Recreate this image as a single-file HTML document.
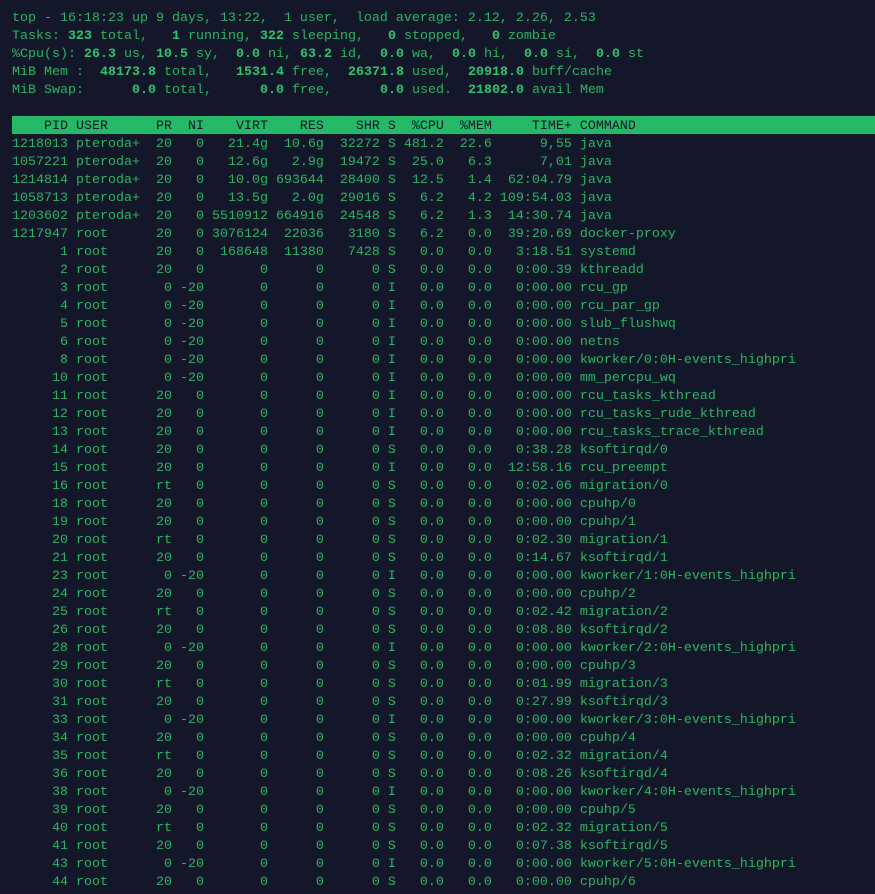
<!DOCTYPE html>
<html><head><meta charset="utf-8"><style>
html,body{margin:0;padding:0;background:#14172a;width:875px;height:894px;overflow:hidden;position:relative}
.bar{position:absolute;left:12px;top:116px;width:863px;height:18px;background:#25b866}
pre{position:relative;margin:0;padding:10px 0 0 12px;font-family:"Liberation Mono","DejaVu Sans Mono",monospace;font-size:13.33px;line-height:18px;color:#2bb463;white-space:pre}
b{color:#2fc46c}
.h{color:#14172a}
</style></head><body><div class="bar"></div><pre>top - 16:18:23 up 9 days, 13:22,  1 user,  load average: 2.12, 2.26, 2.53
Tasks: <b>323</b> total,   <b>1</b> running, <b>322</b> sleeping,   <b>0</b> stopped,   <b>0</b> zombie
%Cpu(s): <b>26.3</b> us, <b>10.5</b> sy,  <b>0.0</b> ni, <b>63.2</b> id,  <b>0.0</b> wa,  <b>0.0</b> hi,  <b>0.0</b> si,  <b>0.0</b> st
MiB Mem :  <b>48173.8</b> total,   <b>1531.4</b> free,  <b>26371.8</b> used,  <b>20918.0</b> buff/cache
MiB Swap:      <b>0.0</b> total,      <b>0.0</b> free,      <b>0.0</b> used.  <b>21802.0</b> avail Mem

<span class="h">    PID USER      PR  NI    VIRT    RES    SHR S  %CPU  %MEM     TIME+ COMMAND</span>
1218013 pteroda+  20   0   21.4g  10.6g  32272 S 481.2  22.6      9,55 java
1057221 pteroda+  20   0   12.6g   2.9g  19472 S  25.0   6.3      7,01 java
1214814 pteroda+  20   0   10.0g 693644  28400 S  12.5   1.4  62:04.79 java
1058713 pteroda+  20   0   13.5g   2.0g  29016 S   6.2   4.2 109:54.03 java
1203602 pteroda+  20   0 5510912 664916  24548 S   6.2   1.3  14:30.74 java
1217947 root      20   0 3076124  22036   3180 S   6.2   0.0  39:20.69 docker-proxy
      1 root      20   0  168648  11380   7428 S   0.0   0.0   3:18.51 systemd
      2 root      20   0       0      0      0 S   0.0   0.0   0:00.39 kthreadd
      3 root       0 -20       0      0      0 I   0.0   0.0   0:00.00 rcu_gp
      4 root       0 -20       0      0      0 I   0.0   0.0   0:00.00 rcu_par_gp
      5 root       0 -20       0      0      0 I   0.0   0.0   0:00.00 slub_flushwq
      6 root       0 -20       0      0      0 I   0.0   0.0   0:00.00 netns
      8 root       0 -20       0      0      0 I   0.0   0.0   0:00.00 kworker/0:0H-events_highpri
     10 root       0 -20       0      0      0 I   0.0   0.0   0:00.00 mm_percpu_wq
     11 root      20   0       0      0      0 I   0.0   0.0   0:00.00 rcu_tasks_kthread
     12 root      20   0       0      0      0 I   0.0   0.0   0:00.00 rcu_tasks_rude_kthread
     13 root      20   0       0      0      0 I   0.0   0.0   0:00.00 rcu_tasks_trace_kthread
     14 root      20   0       0      0      0 S   0.0   0.0   0:38.28 ksoftirqd/0
     15 root      20   0       0      0      0 I   0.0   0.0  12:58.16 rcu_preempt
     16 root      rt   0       0      0      0 S   0.0   0.0   0:02.06 migration/0
     18 root      20   0       0      0      0 S   0.0   0.0   0:00.00 cpuhp/0
     19 root      20   0       0      0      0 S   0.0   0.0   0:00.00 cpuhp/1
     20 root      rt   0       0      0      0 S   0.0   0.0   0:02.30 migration/1
     21 root      20   0       0      0      0 S   0.0   0.0   0:14.67 ksoftirqd/1
     23 root       0 -20       0      0      0 I   0.0   0.0   0:00.00 kworker/1:0H-events_highpri
     24 root      20   0       0      0      0 S   0.0   0.0   0:00.00 cpuhp/2
     25 root      rt   0       0      0      0 S   0.0   0.0   0:02.42 migration/2
     26 root      20   0       0      0      0 S   0.0   0.0   0:08.80 ksoftirqd/2
     28 root       0 -20       0      0      0 I   0.0   0.0   0:00.00 kworker/2:0H-events_highpri
     29 root      20   0       0      0      0 S   0.0   0.0   0:00.00 cpuhp/3
     30 root      rt   0       0      0      0 S   0.0   0.0   0:01.99 migration/3
     31 root      20   0       0      0      0 S   0.0   0.0   0:27.99 ksoftirqd/3
     33 root       0 -20       0      0      0 I   0.0   0.0   0:00.00 kworker/3:0H-events_highpri
     34 root      20   0       0      0      0 S   0.0   0.0   0:00.00 cpuhp/4
     35 root      rt   0       0      0      0 S   0.0   0.0   0:02.32 migration/4
     36 root      20   0       0      0      0 S   0.0   0.0   0:08.26 ksoftirqd/4
     38 root       0 -20       0      0      0 I   0.0   0.0   0:00.00 kworker/4:0H-events_highpri
     39 root      20   0       0      0      0 S   0.0   0.0   0:00.00 cpuhp/5
     40 root      rt   0       0      0      0 S   0.0   0.0   0:02.32 migration/5
     41 root      20   0       0      0      0 S   0.0   0.0   0:07.38 ksoftirqd/5
     43 root       0 -20       0      0      0 I   0.0   0.0   0:00.00 kworker/5:0H-events_highpri
     44 root      20   0       0      0      0 S   0.0   0.0   0:00.00 cpuhp/6
</pre></body></html>
